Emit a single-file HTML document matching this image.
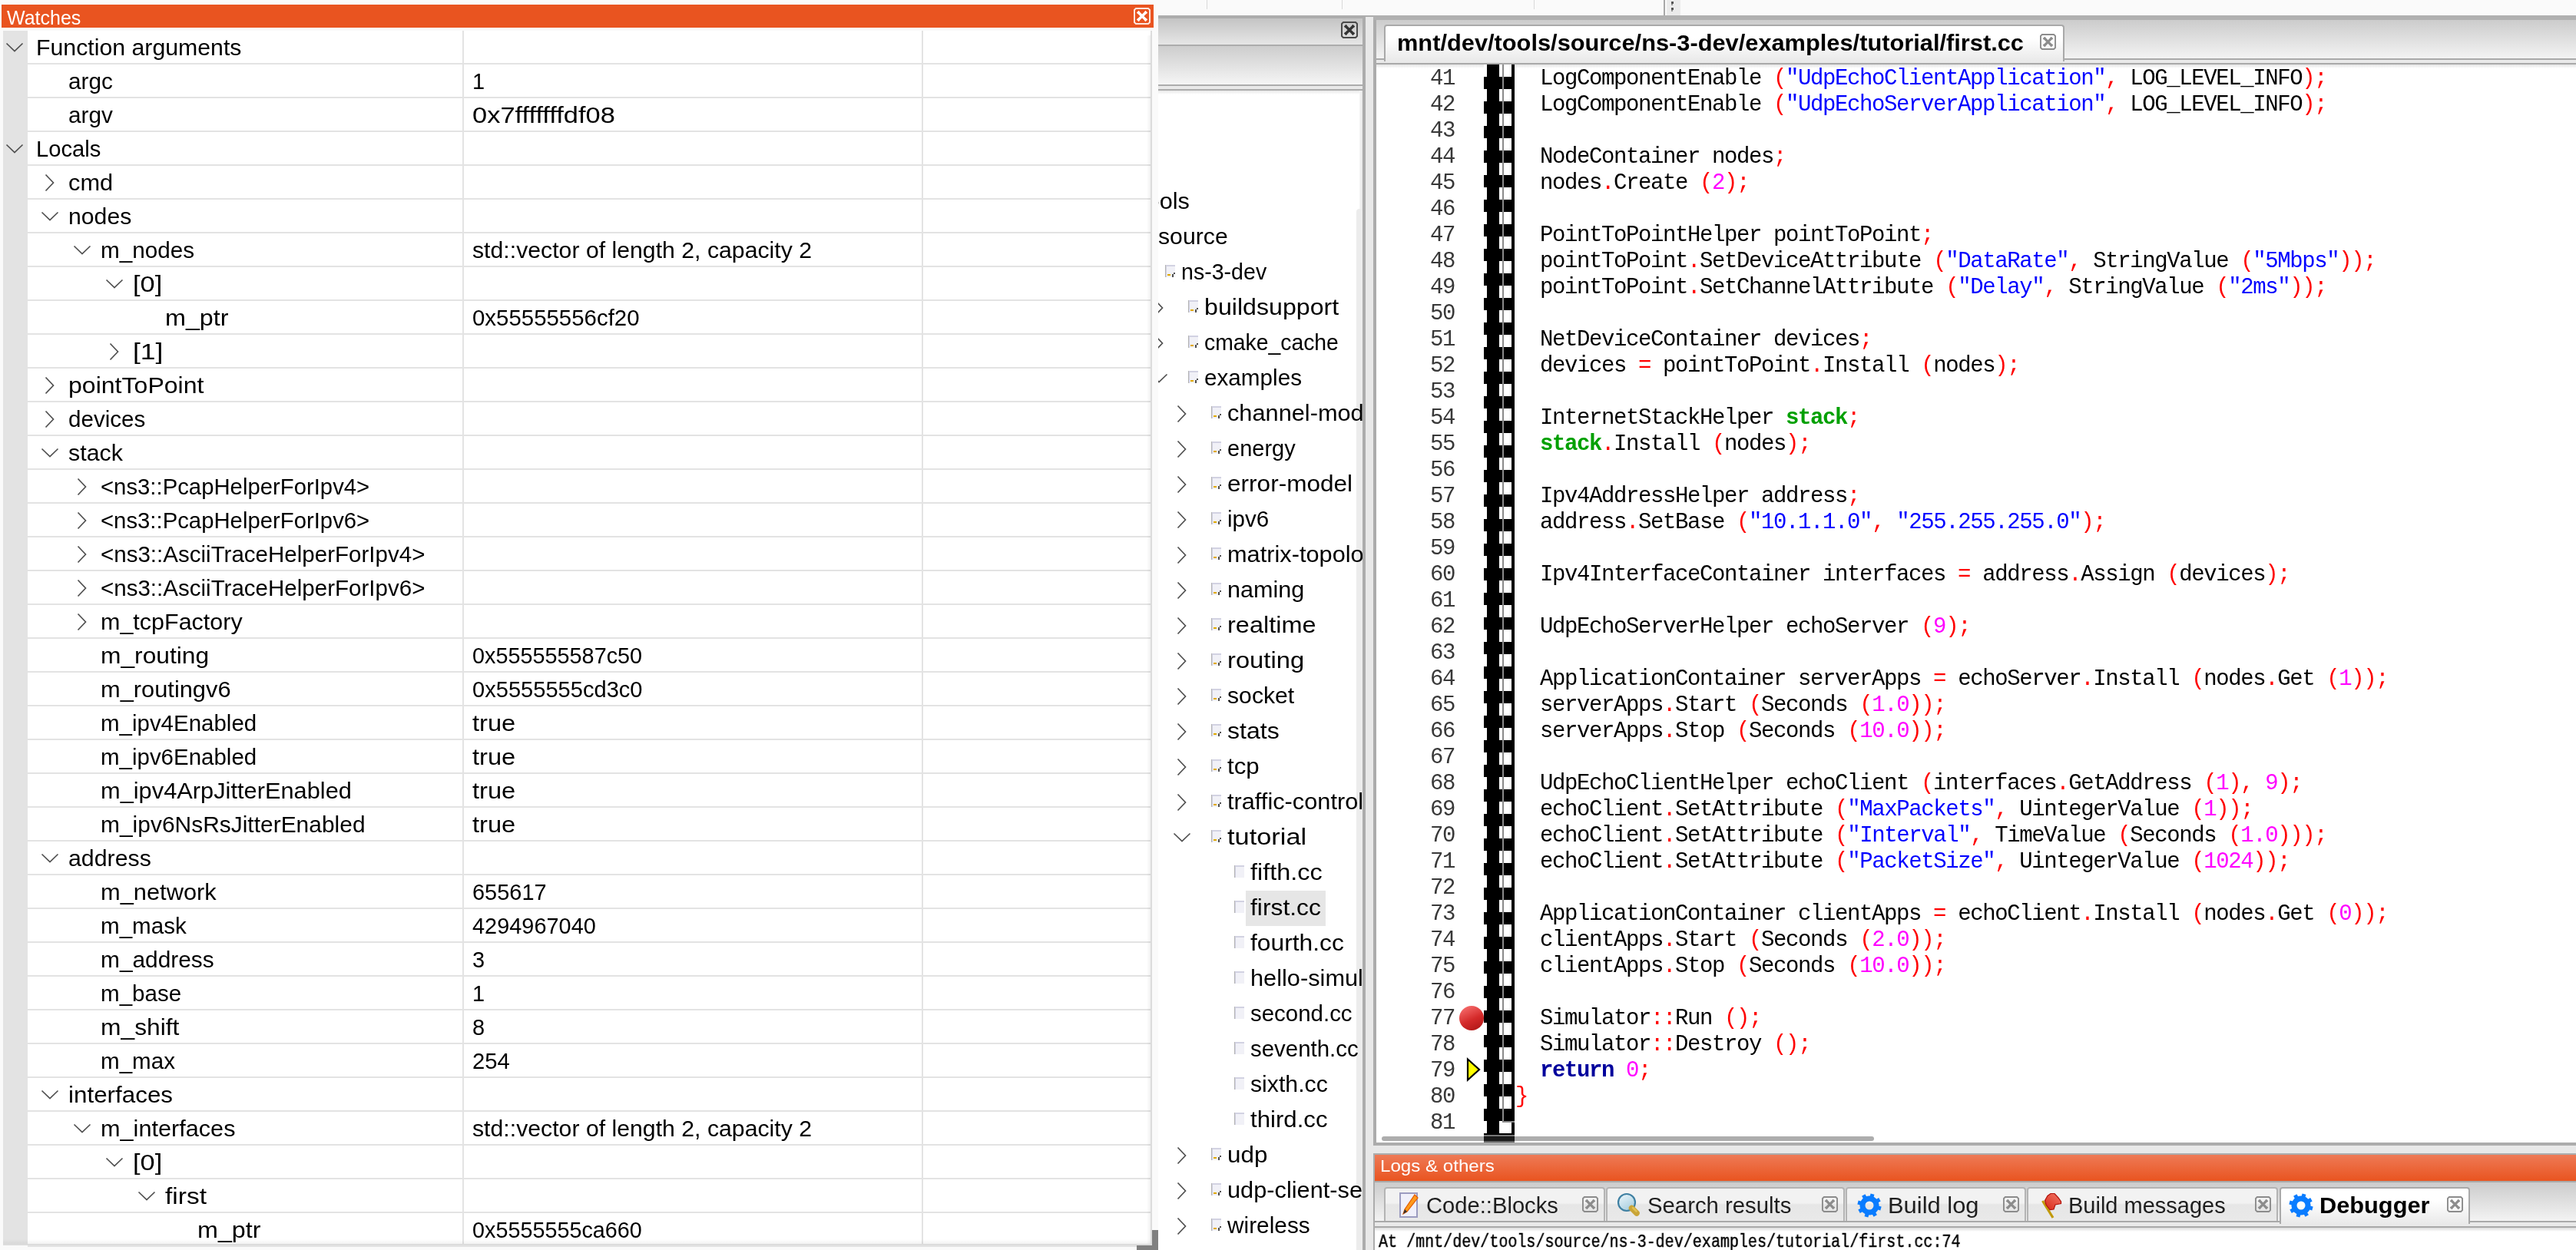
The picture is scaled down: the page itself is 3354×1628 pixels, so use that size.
<!DOCTYPE html>
<html><head><meta charset="utf-8"><title>Code::Blocks Watches</title><style>
*{margin:0;padding:0;box-sizing:content-box}
html,body{width:3354px;height:1628px;overflow:hidden;background:#fafafa}
body{position:relative;font-family:'Liberation Sans', sans-serif;color:#000}
body div{position:absolute}
.t{line-height:0;white-space:pre}
.ln{left:1798px;width:96px;letter-spacing:-1.4px;text-align:right;font-family:'Liberation Mono', monospace;font-size:29px;line-height:0;color:#383838;white-space:pre}
.c{left:1973px;letter-spacing:-1.4px;font-family:'Liberation Mono', monospace;font-size:29px;line-height:0;white-space:pre;color:#000}
.c b{font-weight:400}
.c .s{color:#0000ff}
.c .n{color:#ff00ff}
.c .o{color:#ff0000}
.c .k{color:#00009c;font-weight:700}
.c .g{color:#00a000;font-weight:700}
</style></head><body><div id="root" style="left:0;top:0;width:3354px;height:1628px;will-change:transform;background:#fafafa">
<div style="left:1571px;top:0px;width:1px;height:12px;background:#d9d9d9;"></div>
<div style="left:1747px;top:0px;width:1px;height:12px;background:#d9d9d9;"></div>
<div style="left:1997px;top:0px;width:1px;height:12px;background:#d9d9d9;"></div>
<div style="left:2166px;top:0px;width:1.5px;height:20px;background:#a8a8a8;"></div>
<div style="left:2170px;top:0px;width:18px;height:20px;background:#ebebeb;"></div>
<div style="left:2176px;top:2px;width:3px;height:3px;background:#555;"></div>
<div style="left:2176px;top:5px;width:2px;height:2px;background:#999;"></div>
<div style="left:2176px;top:10px;width:3px;height:3px;background:#555;"></div>
<div style="left:2176px;top:13px;width:2px;height:2px;background:#999;"></div>
<div style="left:2px;top:6px;width:1500px;height:30px;background:#e95420;"></div>
<div class="t" style="left:9px;top:22.99px;font-size:26px;color:#fff;transform:scaleX(0.9619);transform-origin:0 0;">Watches</div>
<svg style="position:absolute;left:1476px;top:10px" width="22" height="22" viewBox="0 0 22 22"><path d="M3 1H19L21 3V19L19 21H3L1 19V3Z" fill="none" stroke="#fff" stroke-opacity="0.85" stroke-width="2"/><path d="M6.5 6.5L15.5 15.5M15.5 6.5L6.5 15.5" stroke="#fff" stroke-width="3.4"/><path d="M4.6 7.4L7.4 4.6M14.6 4.6L17.4 7.4M4.6 14.6L7.4 17.4M14.6 17.4L17.4 14.6" stroke="#fff" stroke-width="2.2"/></svg>
<div style="left:4px;top:40px;width:1496px;height:1582px;background:#fff;"></div>
<div style="left:4px;top:40px;width:32px;height:1582px;background:#e3e3e3;"></div>
<div style="left:36px;top:82px;width:1462px;height:2px;background:#e3e3e3;"></div>
<div style="left:36px;top:126px;width:1462px;height:2px;background:#e3e3e3;"></div>
<div style="left:36px;top:170px;width:1462px;height:2px;background:#e3e3e3;"></div>
<div style="left:36px;top:214px;width:1462px;height:2px;background:#e3e3e3;"></div>
<div style="left:36px;top:258px;width:1462px;height:2px;background:#e3e3e3;"></div>
<div style="left:36px;top:302px;width:1462px;height:2px;background:#e3e3e3;"></div>
<div style="left:36px;top:346px;width:1462px;height:2px;background:#e3e3e3;"></div>
<div style="left:36px;top:390px;width:1462px;height:2px;background:#e3e3e3;"></div>
<div style="left:36px;top:434px;width:1462px;height:2px;background:#e3e3e3;"></div>
<div style="left:36px;top:478px;width:1462px;height:2px;background:#e3e3e3;"></div>
<div style="left:36px;top:522px;width:1462px;height:2px;background:#e3e3e3;"></div>
<div style="left:36px;top:566px;width:1462px;height:2px;background:#e3e3e3;"></div>
<div style="left:36px;top:610px;width:1462px;height:2px;background:#e3e3e3;"></div>
<div style="left:36px;top:654px;width:1462px;height:2px;background:#e3e3e3;"></div>
<div style="left:36px;top:698px;width:1462px;height:2px;background:#e3e3e3;"></div>
<div style="left:36px;top:742px;width:1462px;height:2px;background:#e3e3e3;"></div>
<div style="left:36px;top:786px;width:1462px;height:2px;background:#e3e3e3;"></div>
<div style="left:36px;top:830px;width:1462px;height:2px;background:#e3e3e3;"></div>
<div style="left:36px;top:874px;width:1462px;height:2px;background:#e3e3e3;"></div>
<div style="left:36px;top:918px;width:1462px;height:2px;background:#e3e3e3;"></div>
<div style="left:36px;top:962px;width:1462px;height:2px;background:#e3e3e3;"></div>
<div style="left:36px;top:1006px;width:1462px;height:2px;background:#e3e3e3;"></div>
<div style="left:36px;top:1050px;width:1462px;height:2px;background:#e3e3e3;"></div>
<div style="left:36px;top:1094px;width:1462px;height:2px;background:#e3e3e3;"></div>
<div style="left:36px;top:1138px;width:1462px;height:2px;background:#e3e3e3;"></div>
<div style="left:36px;top:1182px;width:1462px;height:2px;background:#e3e3e3;"></div>
<div style="left:36px;top:1226px;width:1462px;height:2px;background:#e3e3e3;"></div>
<div style="left:36px;top:1270px;width:1462px;height:2px;background:#e3e3e3;"></div>
<div style="left:36px;top:1314px;width:1462px;height:2px;background:#e3e3e3;"></div>
<div style="left:36px;top:1358px;width:1462px;height:2px;background:#e3e3e3;"></div>
<div style="left:36px;top:1402px;width:1462px;height:2px;background:#e3e3e3;"></div>
<div style="left:36px;top:1446px;width:1462px;height:2px;background:#e3e3e3;"></div>
<div style="left:36px;top:1490px;width:1462px;height:2px;background:#e3e3e3;"></div>
<div style="left:36px;top:1534px;width:1462px;height:2px;background:#e3e3e3;"></div>
<div style="left:36px;top:1578px;width:1462px;height:2px;background:#e3e3e3;"></div>
<div style="left:36px;top:1622px;width:1462px;height:2px;background:#e3e3e3;"></div>
<div style="left:602px;top:40px;width:2px;height:1582px;background:#e3e3e3;"></div>
<div style="left:1200px;top:40px;width:2px;height:1582px;background:#e3e3e3;"></div>
<div style="left:1493px;top:46px;width:5px;height:1574px;background:linear-gradient(90deg,rgba(0,0,0,0),rgba(0,0,0,0.06));border-radius:3px 0 0 0"></div>
<div style="left:1498px;top:40px;width:2px;height:1582px;background:#dcdcdc;"></div>
<div style="left:4px;top:1614px;width:1494px;height:6px;background:linear-gradient(rgba(0,0,0,0),rgba(0,0,0,0.05));"></div>
<div style="left:4px;top:1620px;width:1496px;height:2px;background:#dcdcdc;"></div>
<div style="left:1500px;top:1602px;width:8px;height:26px;background:#808080;"></div>
<div style="left:1480px;top:1622px;width:28px;height:6px;background:#808080;"></div>
<svg style="position:absolute;left:7px;top:54.5px" width="24" height="14"><path d="M1.5 1.5L12 11.5L22.5 1.5" fill="none" stroke="#505050" stroke-width="1.7"/></svg>
<div class="t" style="left:47px;top:61.95px;font-size:29px;transform:scaleX(1.0435);transform-origin:0 0;">Function arguments</div>
<div class="t" style="left:89px;top:105.95px;font-size:29px;transform:scaleX(1.0255);transform-origin:0 0;">argc</div>
<div class="t" style="left:615px;top:105.95px;font-size:29px;">1</div>
<div class="t" style="left:89px;top:149.95px;font-size:29px;transform:scaleX(1.0255);transform-origin:0 0;">argv</div>
<div class="t" style="left:615px;top:149.95px;font-size:29px;transform:scaleX(1.1883);transform-origin:0 0;">0x7fffffffdf08</div>
<svg style="position:absolute;left:7px;top:186.5px" width="24" height="14"><path d="M1.5 1.5L12 11.5L22.5 1.5" fill="none" stroke="#505050" stroke-width="1.7"/></svg>
<div class="t" style="left:47px;top:193.95px;font-size:29px;transform:scaleX(1.0074);transform-origin:0 0;">Locals</div>
<svg style="position:absolute;left:58px;top:225.5px" width="14" height="24"><path d="M1.5 1.5L11.5 12L1.5 22.5" fill="none" stroke="#505050" stroke-width="1.7"/></svg>
<div class="t" style="left:89px;top:237.95px;font-size:29px;transform:scaleX(1.0615);transform-origin:0 0;">cmd</div>
<svg style="position:absolute;left:53px;top:274.5px" width="24" height="14"><path d="M1.5 1.5L12 11.5L22.5 1.5" fill="none" stroke="#505050" stroke-width="1.7"/></svg>
<div class="t" style="left:89px;top:281.95px;font-size:29px;transform:scaleX(1.0421);transform-origin:0 0;">nodes</div>
<svg style="position:absolute;left:95px;top:318.5px" width="24" height="14"><path d="M1.5 1.5L12 11.5L22.5 1.5" fill="none" stroke="#505050" stroke-width="1.7"/></svg>
<div class="t" style="left:131px;top:325.95px;font-size:29px;transform:scaleX(1.0241);transform-origin:0 0;">m_nodes</div>
<div class="t" style="left:615px;top:325.95px;font-size:29px;transform:scaleX(1.0427);transform-origin:0 0;">std::vector of length 2, capacity 2</div>
<svg style="position:absolute;left:137px;top:362.5px" width="24" height="14"><path d="M1.5 1.5L12 11.5L22.5 1.5" fill="none" stroke="#505050" stroke-width="1.7"/></svg>
<div class="t" style="left:173px;top:369.95px;font-size:29px;transform:scaleX(1.1857);transform-origin:0 0;">[0]</div>
<div class="t" style="left:215px;top:413.95px;font-size:29px;transform:scaleX(1.1139);transform-origin:0 0;">m_ptr</div>
<div class="t" style="left:615px;top:413.95px;font-size:29px;transform:scaleX(1.0142);transform-origin:0 0;">0x55555556cf20</div>
<svg style="position:absolute;left:142px;top:445.5px" width="14" height="24"><path d="M1.5 1.5L11.5 12L1.5 22.5" fill="none" stroke="#505050" stroke-width="1.7"/></svg>
<div class="t" style="left:173px;top:457.95px;font-size:29px;transform:scaleX(1.2214);transform-origin:0 0;">[1]</div>
<svg style="position:absolute;left:58px;top:489.5px" width="14" height="24"><path d="M1.5 1.5L11.5 12L1.5 22.5" fill="none" stroke="#505050" stroke-width="1.7"/></svg>
<div class="t" style="left:89px;top:501.95px;font-size:29px;transform:scaleX(1.1057);transform-origin:0 0;">pointToPoint</div>
<svg style="position:absolute;left:58px;top:533.5px" width="14" height="24"><path d="M1.5 1.5L11.5 12L1.5 22.5" fill="none" stroke="#505050" stroke-width="1.7"/></svg>
<div class="t" style="left:89px;top:545.95px;font-size:29px;transform:scaleX(1.0208);transform-origin:0 0;">devices</div>
<svg style="position:absolute;left:53px;top:582.5px" width="24" height="14"><path d="M1.5 1.5L12 11.5L22.5 1.5" fill="none" stroke="#505050" stroke-width="1.7"/></svg>
<div class="t" style="left:89px;top:589.95px;font-size:29px;transform:scaleX(1.0478);transform-origin:0 0;">stack</div>
<svg style="position:absolute;left:100px;top:621.5px" width="14" height="24"><path d="M1.5 1.5L11.5 12L1.5 22.5" fill="none" stroke="#505050" stroke-width="1.7"/></svg>
<div class="t" style="left:131px;top:633.95px;font-size:29px;transform:scaleX(1.0104);transform-origin:0 0;">&lt;ns3::PcapHelperForIpv4&gt;</div>
<svg style="position:absolute;left:100px;top:665.5px" width="14" height="24"><path d="M1.5 1.5L11.5 12L1.5 22.5" fill="none" stroke="#505050" stroke-width="1.7"/></svg>
<div class="t" style="left:131px;top:677.95px;font-size:29px;transform:scaleX(1.0104);transform-origin:0 0;">&lt;ns3::PcapHelperForIpv6&gt;</div>
<svg style="position:absolute;left:100px;top:709.5px" width="14" height="24"><path d="M1.5 1.5L11.5 12L1.5 22.5" fill="none" stroke="#505050" stroke-width="1.7"/></svg>
<div class="t" style="left:131px;top:721.95px;font-size:29px;transform:scaleX(1.0184);transform-origin:0 0;">&lt;ns3::AsciiTraceHelperForIpv4&gt;</div>
<svg style="position:absolute;left:100px;top:753.5px" width="14" height="24"><path d="M1.5 1.5L11.5 12L1.5 22.5" fill="none" stroke="#505050" stroke-width="1.7"/></svg>
<div class="t" style="left:131px;top:765.95px;font-size:29px;transform:scaleX(1.0184);transform-origin:0 0;">&lt;ns3::AsciiTraceHelperForIpv6&gt;</div>
<svg style="position:absolute;left:100px;top:797.5px" width="14" height="24"><path d="M1.5 1.5L11.5 12L1.5 22.5" fill="none" stroke="#505050" stroke-width="1.7"/></svg>
<div class="t" style="left:131px;top:809.95px;font-size:29px;transform:scaleX(1.0511);transform-origin:0 0;">m_tcpFactory</div>
<div class="t" style="left:131px;top:853.95px;font-size:29px;transform:scaleX(1.0944);transform-origin:0 0;">m_routing</div>
<div class="t" style="left:615px;top:853.95px;font-size:29px;transform:scaleX(0.9937);transform-origin:0 0;">0x555555587c50</div>
<div class="t" style="left:131px;top:897.95px;font-size:29px;transform:scaleX(1.0624);transform-origin:0 0;">m_routingv6</div>
<div class="t" style="left:615px;top:897.95px;font-size:29px;transform:scaleX(1.0027);transform-origin:0 0;">0x5555555cd3c0</div>
<div class="t" style="left:131px;top:941.95px;font-size:29px;transform:scaleX(1.0163);transform-origin:0 0;">m_ipv4Enabled</div>
<div class="t" style="left:615px;top:941.95px;font-size:29px;transform:scaleX(1.1265);transform-origin:0 0;">true</div>
<div class="t" style="left:131px;top:985.95px;font-size:29px;transform:scaleX(1.0163);transform-origin:0 0;">m_ipv6Enabled</div>
<div class="t" style="left:615px;top:985.95px;font-size:29px;transform:scaleX(1.1265);transform-origin:0 0;">true</div>
<div class="t" style="left:131px;top:1029.95px;font-size:29px;transform:scaleX(1.0618);transform-origin:0 0;">m_ipv4ArpJitterEnabled</div>
<div class="t" style="left:615px;top:1029.95px;font-size:29px;transform:scaleX(1.1265);transform-origin:0 0;">true</div>
<div class="t" style="left:131px;top:1073.95px;font-size:29px;transform:scaleX(1.0327);transform-origin:0 0;">m_ipv6NsRsJitterEnabled</div>
<div class="t" style="left:615px;top:1073.95px;font-size:29px;transform:scaleX(1.1265);transform-origin:0 0;">true</div>
<svg style="position:absolute;left:53px;top:1110.5px" width="24" height="14"><path d="M1.5 1.5L12 11.5L22.5 1.5" fill="none" stroke="#505050" stroke-width="1.7"/></svg>
<div class="t" style="left:89px;top:1117.95px;font-size:29px;transform:scaleX(1.0455);transform-origin:0 0;">address</div>
<div class="t" style="left:131px;top:1161.95px;font-size:29px;transform:scaleX(1.0629);transform-origin:0 0;">m_network</div>
<div class="t" style="left:615px;top:1161.95px;font-size:29px;transform:scaleX(0.9979);transform-origin:0 0;">655617</div>
<div class="t" style="left:131px;top:1205.95px;font-size:29px;transform:scaleX(1.0206);transform-origin:0 0;">m_mask</div>
<div class="t" style="left:615px;top:1205.95px;font-size:29px;transform:scaleX(0.9975);transform-origin:0 0;">4294967040</div>
<div class="t" style="left:131px;top:1249.95px;font-size:29px;transform:scaleX(1.0298);transform-origin:0 0;">m_address</div>
<div class="t" style="left:615px;top:1249.95px;font-size:29px;">3</div>
<div class="t" style="left:131px;top:1293.95px;font-size:29px;transform:scaleX(1.0200);transform-origin:0 0;">m_base</div>
<div class="t" style="left:615px;top:1293.95px;font-size:29px;">1</div>
<div class="t" style="left:131px;top:1337.95px;font-size:29px;transform:scaleX(1.0957);transform-origin:0 0;">m_shift</div>
<div class="t" style="left:615px;top:1337.95px;font-size:29px;">8</div>
<div class="t" style="left:131px;top:1381.95px;font-size:29px;transform:scaleX(1.0194);transform-origin:0 0;">m_max</div>
<div class="t" style="left:615px;top:1381.95px;font-size:29px;transform:scaleX(1.0106);transform-origin:0 0;">254</div>
<svg style="position:absolute;left:53px;top:1418.5px" width="24" height="14"><path d="M1.5 1.5L12 11.5L22.5 1.5" fill="none" stroke="#505050" stroke-width="1.7"/></svg>
<div class="t" style="left:89px;top:1425.95px;font-size:29px;transform:scaleX(1.0821);transform-origin:0 0;">interfaces</div>
<svg style="position:absolute;left:95px;top:1462.5px" width="24" height="14"><path d="M1.5 1.5L12 11.5L22.5 1.5" fill="none" stroke="#505050" stroke-width="1.7"/></svg>
<div class="t" style="left:131px;top:1469.95px;font-size:29px;transform:scaleX(1.0571);transform-origin:0 0;">m_interfaces</div>
<div class="t" style="left:615px;top:1469.95px;font-size:29px;transform:scaleX(1.0427);transform-origin:0 0;">std::vector of length 2, capacity 2</div>
<svg style="position:absolute;left:137px;top:1506.5px" width="24" height="14"><path d="M1.5 1.5L12 11.5L22.5 1.5" fill="none" stroke="#505050" stroke-width="1.7"/></svg>
<div class="t" style="left:173px;top:1513.95px;font-size:29px;transform:scaleX(1.1857);transform-origin:0 0;">[0]</div>
<svg style="position:absolute;left:179px;top:1550.5px" width="24" height="14"><path d="M1.5 1.5L12 11.5L22.5 1.5" fill="none" stroke="#505050" stroke-width="1.7"/></svg>
<div class="t" style="left:215px;top:1557.95px;font-size:29px;transform:scaleX(1.1553);transform-origin:0 0;">first</div>
<div class="t" style="left:257px;top:1601.95px;font-size:29px;transform:scaleX(1.1139);transform-origin:0 0;">m_ptr</div>
<div class="t" style="left:615px;top:1601.95px;font-size:29px;transform:scaleX(0.9923);transform-origin:0 0;">0x5555555ca660</div>
<div style="left:1508px;top:20px;width:280px;height:4px;background:#acacac;"></div>
<div style="left:1776px;top:20px;width:12px;height:2px;background:#acacac;"></div>
<div style="left:1508px;top:24px;width:268px;height:34px;background:linear-gradient(#c4c4c4,#e6e6e6);"></div>
<div style="left:1508px;top:58px;width:268px;height:2px;background:#acacac;"></div>
<div style="left:1508px;top:60px;width:266px;height:50px;background:linear-gradient(#cdcdcd,#f5f5f5);"></div>
<div style="left:1508px;top:110px;width:266px;height:2px;background:#acacac;"></div>
<div style="left:1508px;top:112px;width:266px;height:4px;background:#e8e8e8;"></div>
<div style="left:1508px;top:116px;width:266px;height:2px;background:#acacac;"></div>
<div style="left:1508px;top:118px;width:266px;height:1510px;background:#fff;"></div>
<div style="left:1508px;top:118px;width:266px;height:5px;background:linear-gradient(#e8e8e8,#fff);"></div>
<div style="left:1774px;top:20px;width:4px;height:1608px;background:#acacac;"></div>
<div style="left:1770px;top:118px;width:4px;height:1510px;background:linear-gradient(90deg,#f6f6f6,#e6e6e6);"></div>
<div style="left:1766px;top:272px;width:8px;height:1356px;background:#ececec;border-radius:4px 4px 0 0"></div>
<svg style="position:absolute;left:1746px;top:28px" width="22" height="22" viewBox="0 0 22 22"><path d="M3 1H19L21 3V19L19 21H3L1 19V3Z" fill="none" stroke="#4a4a4a" stroke-opacity="1.0" stroke-width="2"/><path d="M6.5 6.5L15.5 15.5M15.5 6.5L6.5 15.5" stroke="#333" stroke-width="3.4"/><path d="M4.6 7.4L7.4 4.6M14.6 4.6L17.4 7.4M4.6 14.6L7.4 17.4M14.6 17.4L17.4 14.6" stroke="#333" stroke-width="2.2"/></svg>
<div style="left:1778px;top:22px;width:10px;height:1606px;background:#e8e8e8;"></div>
<div style="left:1508px;top:118px;width:266px;height:1510px;overflow:hidden">
<div class="t" style="left:-24px;top:143.55px;font-size:29px;transform:scaleX(1.06);transform-origin:0 0;">tools</div>
<div class="t" style="left:0px;top:189.55px;font-size:29px;transform:scaleX(1.0424);transform-origin:0 0;">source</div>
<div style="left:9px;top:226.60000000000002px;width:12px;height:16px;background:#f1f1f7;border-left:1px solid #b4b4b4;box-shadow:inset 1px 2px 0 #d2d2e2"></div>
<div style="left:12px;top:238.60000000000002px;width:4px;height:2px;background:#e0a800"></div>
<div style="left:18px;top:238.60000000000002px;width:2px;height:4px;background:#505050"></div>
<div style="left:20px;top:236.60000000000002px;width:2px;height:2px;background:#505050"></div>
<div class="t" style="left:30px;top:235.55px;font-size:29px;transform:scaleX(0.9856);transform-origin:0 0;">ns-3-dev</div>
<div style="left:39px;top:272.6px;width:12px;height:16px;background:#f1f1f7;border-left:1px solid #b4b4b4;box-shadow:inset 1px 2px 0 #d2d2e2"></div>
<div style="left:42px;top:284.6px;width:4px;height:2px;background:#e0a800"></div>
<div style="left:48px;top:284.6px;width:2px;height:4px;background:#505050"></div>
<div style="left:50px;top:282.6px;width:2px;height:2px;background:#505050"></div>
<svg style="position:absolute;left:-6px;top:270.6px" width="14" height="24"><path d="M1.5 1.5L11.5 12L1.5 22.5" fill="none" stroke="#505050" stroke-width="1.7"/></svg>
<div class="t" style="left:60px;top:281.55px;font-size:29px;transform:scaleX(1.1090);transform-origin:0 0;">buildsupport</div>
<div style="left:39px;top:318.6px;width:12px;height:16px;background:#f1f1f7;border-left:1px solid #b4b4b4;box-shadow:inset 1px 2px 0 #d2d2e2"></div>
<div style="left:42px;top:330.6px;width:4px;height:2px;background:#e0a800"></div>
<div style="left:48px;top:330.6px;width:2px;height:4px;background:#505050"></div>
<div style="left:50px;top:328.6px;width:2px;height:2px;background:#505050"></div>
<svg style="position:absolute;left:-6px;top:316.6px" width="14" height="24"><path d="M1.5 1.5L11.5 12L1.5 22.5" fill="none" stroke="#505050" stroke-width="1.7"/></svg>
<div class="t" style="left:60px;top:327.55px;font-size:29px;transform:scaleX(0.9774);transform-origin:0 0;">cmake_cache</div>
<div style="left:39px;top:364.6px;width:12px;height:16px;background:#f1f1f7;border-left:1px solid #b4b4b4;box-shadow:inset 1px 2px 0 #d2d2e2"></div>
<div style="left:42px;top:376.6px;width:4px;height:2px;background:#e0a800"></div>
<div style="left:48px;top:376.6px;width:2px;height:4px;background:#505050"></div>
<div style="left:50px;top:374.6px;width:2px;height:2px;background:#505050"></div>
<svg style="position:absolute;left:-11px;top:367.6px" width="24" height="14"><path d="M1.5 1.5L12 11.5L22.5 1.5" fill="none" stroke="#505050" stroke-width="1.7"/></svg>
<div class="t" style="left:60px;top:373.55px;font-size:29px;transform:scaleX(1.0230);transform-origin:0 0;">examples</div>
<div style="left:69px;top:410.6px;width:12px;height:16px;background:#f1f1f7;border-left:1px solid #b4b4b4;box-shadow:inset 1px 2px 0 #d2d2e2"></div>
<div style="left:72px;top:422.6px;width:4px;height:2px;background:#e0a800"></div>
<div style="left:78px;top:422.6px;width:2px;height:4px;background:#505050"></div>
<div style="left:80px;top:420.6px;width:2px;height:2px;background:#505050"></div>
<svg style="position:absolute;left:24px;top:408.6px" width="14" height="24"><path d="M1.5 1.5L11.5 12L1.5 22.5" fill="none" stroke="#505050" stroke-width="1.7"/></svg>
<div class="t" style="left:90px;top:419.55px;font-size:29px;transform:scaleX(1.06);transform-origin:0 0;">channel-models</div>
<div style="left:69px;top:456.6px;width:12px;height:16px;background:#f1f1f7;border-left:1px solid #b4b4b4;box-shadow:inset 1px 2px 0 #d2d2e2"></div>
<div style="left:72px;top:468.6px;width:4px;height:2px;background:#e0a800"></div>
<div style="left:78px;top:468.6px;width:2px;height:4px;background:#505050"></div>
<div style="left:80px;top:466.6px;width:2px;height:2px;background:#505050"></div>
<svg style="position:absolute;left:24px;top:454.6px" width="14" height="24"><path d="M1.5 1.5L11.5 12L1.5 22.5" fill="none" stroke="#505050" stroke-width="1.7"/></svg>
<div class="t" style="left:90px;top:465.55px;font-size:29px;transform:scaleX(1.0000);transform-origin:0 0;">energy</div>
<div style="left:69px;top:502.6px;width:12px;height:16px;background:#f1f1f7;border-left:1px solid #b4b4b4;box-shadow:inset 1px 2px 0 #d2d2e2"></div>
<div style="left:72px;top:514.6px;width:4px;height:2px;background:#e0a800"></div>
<div style="left:78px;top:514.6px;width:2px;height:4px;background:#505050"></div>
<div style="left:80px;top:512.6px;width:2px;height:2px;background:#505050"></div>
<svg style="position:absolute;left:24px;top:500.6px" width="14" height="24"><path d="M1.5 1.5L11.5 12L1.5 22.5" fill="none" stroke="#505050" stroke-width="1.7"/></svg>
<div class="t" style="left:90px;top:511.55px;font-size:29px;transform:scaleX(1.0884);transform-origin:0 0;">error-model</div>
<div style="left:69px;top:548.6px;width:12px;height:16px;background:#f1f1f7;border-left:1px solid #b4b4b4;box-shadow:inset 1px 2px 0 #d2d2e2"></div>
<div style="left:72px;top:560.6px;width:4px;height:2px;background:#e0a800"></div>
<div style="left:78px;top:560.6px;width:2px;height:4px;background:#505050"></div>
<div style="left:80px;top:558.6px;width:2px;height:2px;background:#505050"></div>
<svg style="position:absolute;left:24px;top:546.6px" width="14" height="24"><path d="M1.5 1.5L11.5 12L1.5 22.5" fill="none" stroke="#505050" stroke-width="1.7"/></svg>
<div class="t" style="left:90px;top:557.55px;font-size:29px;transform:scaleX(1.0200);transform-origin:0 0;">ipv6</div>
<div style="left:69px;top:594.6px;width:12px;height:16px;background:#f1f1f7;border-left:1px solid #b4b4b4;box-shadow:inset 1px 2px 0 #d2d2e2"></div>
<div style="left:72px;top:606.6px;width:4px;height:2px;background:#e0a800"></div>
<div style="left:78px;top:606.6px;width:2px;height:4px;background:#505050"></div>
<div style="left:80px;top:604.6px;width:2px;height:2px;background:#505050"></div>
<svg style="position:absolute;left:24px;top:592.6px" width="14" height="24"><path d="M1.5 1.5L11.5 12L1.5 22.5" fill="none" stroke="#505050" stroke-width="1.7"/></svg>
<div class="t" style="left:90px;top:603.55px;font-size:29px;transform:scaleX(1.06);transform-origin:0 0;">matrix-topology</div>
<div style="left:69px;top:640.6px;width:12px;height:16px;background:#f1f1f7;border-left:1px solid #b4b4b4;box-shadow:inset 1px 2px 0 #d2d2e2"></div>
<div style="left:72px;top:652.6px;width:4px;height:2px;background:#e0a800"></div>
<div style="left:78px;top:652.6px;width:2px;height:4px;background:#505050"></div>
<div style="left:80px;top:650.6px;width:2px;height:2px;background:#505050"></div>
<svg style="position:absolute;left:24px;top:638.6px" width="14" height="24"><path d="M1.5 1.5L11.5 12L1.5 22.5" fill="none" stroke="#505050" stroke-width="1.7"/></svg>
<div class="t" style="left:90px;top:649.55px;font-size:29px;transform:scaleX(1.0549);transform-origin:0 0;">naming</div>
<div style="left:69px;top:686.6px;width:12px;height:16px;background:#f1f1f7;border-left:1px solid #b4b4b4;box-shadow:inset 1px 2px 0 #d2d2e2"></div>
<div style="left:72px;top:698.6px;width:4px;height:2px;background:#e0a800"></div>
<div style="left:78px;top:698.6px;width:2px;height:4px;background:#505050"></div>
<div style="left:80px;top:696.6px;width:2px;height:2px;background:#505050"></div>
<svg style="position:absolute;left:24px;top:684.6px" width="14" height="24"><path d="M1.5 1.5L11.5 12L1.5 22.5" fill="none" stroke="#505050" stroke-width="1.7"/></svg>
<div class="t" style="left:90px;top:695.55px;font-size:29px;transform:scaleX(1.1200);transform-origin:0 0;">realtime</div>
<div style="left:69px;top:732.6px;width:12px;height:16px;background:#f1f1f7;border-left:1px solid #b4b4b4;box-shadow:inset 1px 2px 0 #d2d2e2"></div>
<div style="left:72px;top:744.6px;width:4px;height:2px;background:#e0a800"></div>
<div style="left:78px;top:744.6px;width:2px;height:4px;background:#505050"></div>
<div style="left:80px;top:742.6px;width:2px;height:2px;background:#505050"></div>
<svg style="position:absolute;left:24px;top:730.6px" width="14" height="24"><path d="M1.5 1.5L11.5 12L1.5 22.5" fill="none" stroke="#505050" stroke-width="1.7"/></svg>
<div class="t" style="left:90px;top:741.55px;font-size:29px;transform:scaleX(1.1294);transform-origin:0 0;">routing</div>
<div style="left:69px;top:778.6px;width:12px;height:16px;background:#f1f1f7;border-left:1px solid #b4b4b4;box-shadow:inset 1px 2px 0 #d2d2e2"></div>
<div style="left:72px;top:790.6px;width:4px;height:2px;background:#e0a800"></div>
<div style="left:78px;top:790.6px;width:2px;height:4px;background:#505050"></div>
<div style="left:80px;top:788.6px;width:2px;height:2px;background:#505050"></div>
<svg style="position:absolute;left:24px;top:776.6px" width="14" height="24"><path d="M1.5 1.5L11.5 12L1.5 22.5" fill="none" stroke="#505050" stroke-width="1.7"/></svg>
<div class="t" style="left:90px;top:787.55px;font-size:29px;transform:scaleX(1.0410);transform-origin:0 0;">socket</div>
<div style="left:69px;top:824.6px;width:12px;height:16px;background:#f1f1f7;border-left:1px solid #b4b4b4;box-shadow:inset 1px 2px 0 #d2d2e2"></div>
<div style="left:72px;top:836.6px;width:4px;height:2px;background:#e0a800"></div>
<div style="left:78px;top:836.6px;width:2px;height:4px;background:#505050"></div>
<div style="left:80px;top:834.6px;width:2px;height:2px;background:#505050"></div>
<svg style="position:absolute;left:24px;top:822.6px" width="14" height="24"><path d="M1.5 1.5L11.5 12L1.5 22.5" fill="none" stroke="#505050" stroke-width="1.7"/></svg>
<div class="t" style="left:90px;top:833.55px;font-size:29px;transform:scaleX(1.1068);transform-origin:0 0;">stats</div>
<div style="left:69px;top:870.6px;width:12px;height:16px;background:#f1f1f7;border-left:1px solid #b4b4b4;box-shadow:inset 1px 2px 0 #d2d2e2"></div>
<div style="left:72px;top:882.6px;width:4px;height:2px;background:#e0a800"></div>
<div style="left:78px;top:882.6px;width:2px;height:4px;background:#505050"></div>
<div style="left:80px;top:880.6px;width:2px;height:2px;background:#505050"></div>
<svg style="position:absolute;left:24px;top:868.6px" width="14" height="24"><path d="M1.5 1.5L11.5 12L1.5 22.5" fill="none" stroke="#505050" stroke-width="1.7"/></svg>
<div class="t" style="left:90px;top:879.55px;font-size:29px;transform:scaleX(1.0789);transform-origin:0 0;">tcp</div>
<div style="left:69px;top:916.5999999999999px;width:12px;height:16px;background:#f1f1f7;border-left:1px solid #b4b4b4;box-shadow:inset 1px 2px 0 #d2d2e2"></div>
<div style="left:72px;top:928.5999999999999px;width:4px;height:2px;background:#e0a800"></div>
<div style="left:78px;top:928.5999999999999px;width:2px;height:4px;background:#505050"></div>
<div style="left:80px;top:926.5999999999999px;width:2px;height:2px;background:#505050"></div>
<svg style="position:absolute;left:24px;top:914.5999999999999px" width="14" height="24"><path d="M1.5 1.5L11.5 12L1.5 22.5" fill="none" stroke="#505050" stroke-width="1.7"/></svg>
<div class="t" style="left:90px;top:925.55px;font-size:29px;transform:scaleX(1.06);transform-origin:0 0;">traffic-control</div>
<div style="left:69px;top:962.5999999999999px;width:12px;height:16px;background:#f1f1f7;border-left:1px solid #b4b4b4;box-shadow:inset 1px 2px 0 #d2d2e2"></div>
<div style="left:72px;top:974.5999999999999px;width:4px;height:2px;background:#e0a800"></div>
<div style="left:78px;top:974.5999999999999px;width:2px;height:4px;background:#505050"></div>
<div style="left:80px;top:972.5999999999999px;width:2px;height:2px;background:#505050"></div>
<svg style="position:absolute;left:19px;top:965.5999999999999px" width="24" height="14"><path d="M1.5 1.5L12 11.5L22.5 1.5" fill="none" stroke="#505050" stroke-width="1.7"/></svg>
<div class="t" style="left:90px;top:971.55px;font-size:29px;transform:scaleX(1.1859);transform-origin:0 0;">tutorial</div>
<div style="left:99px;top:1008.5999999999999px;width:12px;height:16px;background:#f1f1f7;border-left:1px solid #b4b4b4;box-shadow:inset 1px 2px 0 #d2d2e2"></div>
<div class="t" style="left:120px;top:1017.55px;font-size:29px;transform:scaleX(1.1181);transform-origin:0 0;">fifth.cc</div>
<div style="left:114px;top:1041.6px;width:104px;height:46px;background:#e6e6e6;"></div>
<div style="left:99px;top:1054.6px;width:12px;height:16px;background:#f1f1f7;border-left:1px solid #b4b4b4;box-shadow:inset 1px 2px 0 #d2d2e2"></div>
<div class="t" style="left:120px;top:1063.55px;font-size:29px;transform:scaleX(1.0964);transform-origin:0 0;">first.cc</div>
<div style="left:99px;top:1100.6px;width:12px;height:16px;background:#f1f1f7;border-left:1px solid #b4b4b4;box-shadow:inset 1px 2px 0 #d2d2e2"></div>
<div class="t" style="left:120px;top:1109.55px;font-size:29px;transform:scaleX(1.0955);transform-origin:0 0;">fourth.cc</div>
<div style="left:99px;top:1146.6px;width:12px;height:16px;background:#f1f1f7;border-left:1px solid #b4b4b4;box-shadow:inset 1px 2px 0 #d2d2e2"></div>
<div class="t" style="left:120px;top:1155.55px;font-size:29px;transform:scaleX(1.06);transform-origin:0 0;">hello-simulator</div>
<div style="left:99px;top:1192.6px;width:12px;height:16px;background:#f1f1f7;border-left:1px solid #b4b4b4;box-shadow:inset 1px 2px 0 #d2d2e2"></div>
<div class="t" style="left:120px;top:1201.55px;font-size:29px;transform:scaleX(1.0155);transform-origin:0 0;">second.cc</div>
<div style="left:99px;top:1238.6px;width:12px;height:16px;background:#f1f1f7;border-left:1px solid #b4b4b4;box-shadow:inset 1px 2px 0 #d2d2e2"></div>
<div class="t" style="left:120px;top:1247.55px;font-size:29px;transform:scaleX(1.0146);transform-origin:0 0;">seventh.cc</div>
<div style="left:99px;top:1284.6px;width:12px;height:16px;background:#f1f1f7;border-left:1px solid #b4b4b4;box-shadow:inset 1px 2px 0 #d2d2e2"></div>
<div class="t" style="left:120px;top:1293.55px;font-size:29px;transform:scaleX(1.0421);transform-origin:0 0;">sixth.cc</div>
<div style="left:99px;top:1330.6px;width:12px;height:16px;background:#f1f1f7;border-left:1px solid #b4b4b4;box-shadow:inset 1px 2px 0 #d2d2e2"></div>
<div class="t" style="left:120px;top:1339.55px;font-size:29px;transform:scaleX(1.0753);transform-origin:0 0;">third.cc</div>
<div style="left:69px;top:1376.6px;width:12px;height:16px;background:#f1f1f7;border-left:1px solid #b4b4b4;box-shadow:inset 1px 2px 0 #d2d2e2"></div>
<div style="left:72px;top:1388.6px;width:4px;height:2px;background:#e0a800"></div>
<div style="left:78px;top:1388.6px;width:2px;height:4px;background:#505050"></div>
<div style="left:80px;top:1386.6px;width:2px;height:2px;background:#505050"></div>
<svg style="position:absolute;left:24px;top:1374.6px" width="14" height="24"><path d="M1.5 1.5L11.5 12L1.5 22.5" fill="none" stroke="#505050" stroke-width="1.7"/></svg>
<div class="t" style="left:90px;top:1385.55px;font-size:29px;transform:scaleX(1.0822);transform-origin:0 0;">udp</div>
<div style="left:69px;top:1422.6px;width:12px;height:16px;background:#f1f1f7;border-left:1px solid #b4b4b4;box-shadow:inset 1px 2px 0 #d2d2e2"></div>
<div style="left:72px;top:1434.6px;width:4px;height:2px;background:#e0a800"></div>
<div style="left:78px;top:1434.6px;width:2px;height:4px;background:#505050"></div>
<div style="left:80px;top:1432.6px;width:2px;height:2px;background:#505050"></div>
<svg style="position:absolute;left:24px;top:1420.6px" width="14" height="24"><path d="M1.5 1.5L11.5 12L1.5 22.5" fill="none" stroke="#505050" stroke-width="1.7"/></svg>
<div class="t" style="left:90px;top:1431.55px;font-size:29px;transform:scaleX(1.06);transform-origin:0 0;">udp-client-server</div>
<div style="left:69px;top:1468.6px;width:12px;height:16px;background:#f1f1f7;border-left:1px solid #b4b4b4;box-shadow:inset 1px 2px 0 #d2d2e2"></div>
<div style="left:72px;top:1480.6px;width:4px;height:2px;background:#e0a800"></div>
<div style="left:78px;top:1480.6px;width:2px;height:4px;background:#505050"></div>
<div style="left:80px;top:1478.6px;width:2px;height:2px;background:#505050"></div>
<svg style="position:absolute;left:24px;top:1466.6px" width="14" height="24"><path d="M1.5 1.5L11.5 12L1.5 22.5" fill="none" stroke="#505050" stroke-width="1.7"/></svg>
<div class="t" style="left:90px;top:1477.55px;font-size:29px;transform:scaleX(1.0288);transform-origin:0 0;">wireless</div>
</div>
<div style="left:1788px;top:20px;width:4px;height:1472px;background:#acacac;"></div>
<div style="left:1788px;top:20px;width:1566px;height:6px;background:#b0b0b0;"></div>
<div style="left:1792px;top:26px;width:1562px;height:50px;background:linear-gradient(#cccccc,#f3f3f3);"></div>
<div style="left:1792px;top:76px;width:1562px;height:2px;background:#a9a9a9;"></div>
<div style="left:1792px;top:78px;width:1562px;height:4px;background:#e9e9e9;"></div>
<div style="left:1792px;top:82px;width:1562px;height:2px;background:#a9a9a9;"></div>
<div style="left:1802px;top:32px;width:882px;height:46px;border:2px solid #a9a9a9;border-bottom:0;border-radius:4px 4px 0 0;background:linear-gradient(#fff 35%,#e9e9e9)"></div>
<div class="t" style="left:1819px;top:55.95px;font-size:29px;font-weight:700;transform:scaleX(1.0614);transform-origin:0 0;">mnt/dev/tools/source/ns-3-dev/examples/tutorial/first.cc</div>
<svg style="position:absolute;left:2656px;top:44px" width="21" height="21" viewBox="0 0 22 22"><path d="M3 1H19L21 3V19L19 21H3L1 19V3Z" fill="none" stroke="#8c8c8c" stroke-opacity="1.0" stroke-width="2"/><path d="M6.5 6.5L15.5 15.5M15.5 6.5L6.5 15.5" stroke="#8c8c8c" stroke-width="3.4"/><path d="M4.6 7.4L7.4 4.6M14.6 4.6L17.4 7.4M4.6 14.6L7.4 17.4M14.6 17.4L17.4 14.6" stroke="#8c8c8c" stroke-width="2.2"/></svg>
<div style="left:1792px;top:84px;width:1562px;height:1404px;background:#fff;"></div>
<div style="left:1792px;top:84px;width:1562px;height:5px;background:linear-gradient(#e4e4e4,#fff);"></div>
<div style="left:1799px;top:1480px;width:641px;height:6px;background:#adadad;border-radius:3px"></div>
<div style="left:1788px;top:1488px;width:1566px;height:4px;background:#acacac;"></div>
<div style="left:1936px;top:84px;width:16px;height:1404px;background:#000"></div>
<div style="left:1968px;top:84px;width:4px;height:1404px;background:#000"></div>
<div style="left:1952px;top:84px;width:16px;height:1404px;background:repeating-linear-gradient(#fff 0 16px,#000 16px 32px)"></div>
<div style="left:1932px;top:84px;width:4px;height:1404px;background:repeating-linear-gradient(#fff 0 16px,#000 16px 32px)"></div>
<div style="left:1956px;top:84px;width:2px;height:1378px;background:#8a8a8a;"></div>
<div style="left:1956px;top:1460px;width:16px;height:2px;background:#8a8a8a;"></div>
<div style="left:1932px;top:1478px;width:40px;height:10px;background:#1a1a1a;"></div>
<div style="left:1932px;top:1478px;width:40px;height:2px;background:#777;"></div>
<div style="left:1932px;top:1486px;width:40px;height:2px;background:#666;"></div>
<div style="left:1900px;top:1310px;width:32px;height:32px;border-radius:50%;background:linear-gradient(155deg,#f56a6a 10%,#d42a2a 55%,#a81212)"></div>
<svg style="position:absolute;left:1906px;top:1374px" width="26" height="38"><path d="M5 5.5L20 19L5 32.5Z" fill="#ffff00" stroke="#000" stroke-width="2.2" stroke-linejoin="miter"/></svg>
<div class="ln" style="top:102.58px">41</div>
<div class="c" style="top:102.58px">  LogComponentEnable <b class="o">(</b><b class="s">"UdpEchoClientApplication"</b><b class="o">,</b> LOG_LEVEL_INFO<b class="o">)</b><b class="o">;</b></div>
<div class="ln" style="top:136.58px">42</div>
<div class="c" style="top:136.58px">  LogComponentEnable <b class="o">(</b><b class="s">"UdpEchoServerApplication"</b><b class="o">,</b> LOG_LEVEL_INFO<b class="o">)</b><b class="o">;</b></div>
<div class="ln" style="top:170.58px">43</div>
<div class="ln" style="top:204.58px">44</div>
<div class="c" style="top:204.58px">  NodeContainer nodes<b class="o">;</b></div>
<div class="ln" style="top:238.58px">45</div>
<div class="c" style="top:238.58px">  nodes<b class="o">.</b>Create <b class="o">(</b><b class="n">2</b><b class="o">)</b><b class="o">;</b></div>
<div class="ln" style="top:272.58px">46</div>
<div class="ln" style="top:306.58px">47</div>
<div class="c" style="top:306.58px">  PointToPointHelper pointToPoint<b class="o">;</b></div>
<div class="ln" style="top:340.58px">48</div>
<div class="c" style="top:340.58px">  pointToPoint<b class="o">.</b>SetDeviceAttribute <b class="o">(</b><b class="s">"DataRate"</b><b class="o">,</b> StringValue <b class="o">(</b><b class="s">"5Mbps"</b><b class="o">)</b><b class="o">)</b><b class="o">;</b></div>
<div class="ln" style="top:374.58px">49</div>
<div class="c" style="top:374.58px">  pointToPoint<b class="o">.</b>SetChannelAttribute <b class="o">(</b><b class="s">"Delay"</b><b class="o">,</b> StringValue <b class="o">(</b><b class="s">"2ms"</b><b class="o">)</b><b class="o">)</b><b class="o">;</b></div>
<div class="ln" style="top:408.58px">50</div>
<div class="ln" style="top:442.58px">51</div>
<div class="c" style="top:442.58px">  NetDeviceContainer devices<b class="o">;</b></div>
<div class="ln" style="top:476.58px">52</div>
<div class="c" style="top:476.58px">  devices <b class="o">=</b> pointToPoint<b class="o">.</b>Install <b class="o">(</b>nodes<b class="o">)</b><b class="o">;</b></div>
<div class="ln" style="top:510.58px">53</div>
<div class="ln" style="top:544.58px">54</div>
<div class="c" style="top:544.58px">  InternetStackHelper <b class="g">stack</b><b class="o">;</b></div>
<div class="ln" style="top:578.58px">55</div>
<div class="c" style="top:578.58px">  <b class="g">stack</b><b class="o">.</b>Install <b class="o">(</b>nodes<b class="o">)</b><b class="o">;</b></div>
<div class="ln" style="top:612.58px">56</div>
<div class="ln" style="top:646.58px">57</div>
<div class="c" style="top:646.58px">  Ipv4AddressHelper address<b class="o">;</b></div>
<div class="ln" style="top:680.58px">58</div>
<div class="c" style="top:680.58px">  address<b class="o">.</b>SetBase <b class="o">(</b><b class="s">"10.1.1.0"</b><b class="o">,</b> <b class="s">"255.255.255.0"</b><b class="o">)</b><b class="o">;</b></div>
<div class="ln" style="top:714.58px">59</div>
<div class="ln" style="top:748.58px">60</div>
<div class="c" style="top:748.58px">  Ipv4InterfaceContainer interfaces <b class="o">=</b> address<b class="o">.</b>Assign <b class="o">(</b>devices<b class="o">)</b><b class="o">;</b></div>
<div class="ln" style="top:782.58px">61</div>
<div class="ln" style="top:816.58px">62</div>
<div class="c" style="top:816.58px">  UdpEchoServerHelper echoServer <b class="o">(</b><b class="n">9</b><b class="o">)</b><b class="o">;</b></div>
<div class="ln" style="top:850.58px">63</div>
<div class="ln" style="top:884.58px">64</div>
<div class="c" style="top:884.58px">  ApplicationContainer serverApps <b class="o">=</b> echoServer<b class="o">.</b>Install <b class="o">(</b>nodes<b class="o">.</b>Get <b class="o">(</b><b class="n">1</b><b class="o">)</b><b class="o">)</b><b class="o">;</b></div>
<div class="ln" style="top:918.58px">65</div>
<div class="c" style="top:918.58px">  serverApps<b class="o">.</b>Start <b class="o">(</b>Seconds <b class="o">(</b><b class="n">1.0</b><b class="o">)</b><b class="o">)</b><b class="o">;</b></div>
<div class="ln" style="top:952.58px">66</div>
<div class="c" style="top:952.58px">  serverApps<b class="o">.</b>Stop <b class="o">(</b>Seconds <b class="o">(</b><b class="n">10.0</b><b class="o">)</b><b class="o">)</b><b class="o">;</b></div>
<div class="ln" style="top:986.58px">67</div>
<div class="ln" style="top:1020.58px">68</div>
<div class="c" style="top:1020.58px">  UdpEchoClientHelper echoClient <b class="o">(</b>interfaces<b class="o">.</b>GetAddress <b class="o">(</b><b class="n">1</b><b class="o">)</b><b class="o">,</b> <b class="n">9</b><b class="o">)</b><b class="o">;</b></div>
<div class="ln" style="top:1054.58px">69</div>
<div class="c" style="top:1054.58px">  echoClient<b class="o">.</b>SetAttribute <b class="o">(</b><b class="s">"MaxPackets"</b><b class="o">,</b> UintegerValue <b class="o">(</b><b class="n">1</b><b class="o">)</b><b class="o">)</b><b class="o">;</b></div>
<div class="ln" style="top:1088.58px">70</div>
<div class="c" style="top:1088.58px">  echoClient<b class="o">.</b>SetAttribute <b class="o">(</b><b class="s">"Interval"</b><b class="o">,</b> TimeValue <b class="o">(</b>Seconds <b class="o">(</b><b class="n">1.0</b><b class="o">)</b><b class="o">)</b><b class="o">)</b><b class="o">;</b></div>
<div class="ln" style="top:1122.58px">71</div>
<div class="c" style="top:1122.58px">  echoClient<b class="o">.</b>SetAttribute <b class="o">(</b><b class="s">"PacketSize"</b><b class="o">,</b> UintegerValue <b class="o">(</b><b class="n">1024</b><b class="o">)</b><b class="o">)</b><b class="o">;</b></div>
<div class="ln" style="top:1156.58px">72</div>
<div class="ln" style="top:1190.58px">73</div>
<div class="c" style="top:1190.58px">  ApplicationContainer clientApps <b class="o">=</b> echoClient<b class="o">.</b>Install <b class="o">(</b>nodes<b class="o">.</b>Get <b class="o">(</b><b class="n">0</b><b class="o">)</b><b class="o">)</b><b class="o">;</b></div>
<div class="ln" style="top:1224.58px">74</div>
<div class="c" style="top:1224.58px">  clientApps<b class="o">.</b>Start <b class="o">(</b>Seconds <b class="o">(</b><b class="n">2.0</b><b class="o">)</b><b class="o">)</b><b class="o">;</b></div>
<div class="ln" style="top:1258.58px">75</div>
<div class="c" style="top:1258.58px">  clientApps<b class="o">.</b>Stop <b class="o">(</b>Seconds <b class="o">(</b><b class="n">10.0</b><b class="o">)</b><b class="o">)</b><b class="o">;</b></div>
<div class="ln" style="top:1292.58px">76</div>
<div class="ln" style="top:1326.58px">77</div>
<div class="c" style="top:1326.58px">  Simulator<b class="o">:</b><b class="o">:</b>Run <b class="o">(</b><b class="o">)</b><b class="o">;</b></div>
<div class="ln" style="top:1360.58px">78</div>
<div class="c" style="top:1360.58px">  Simulator<b class="o">:</b><b class="o">:</b>Destroy <b class="o">(</b><b class="o">)</b><b class="o">;</b></div>
<div class="ln" style="top:1394.58px">79</div>
<div class="c" style="top:1394.58px">  <b class="k">return</b> <b class="n">0</b><b class="o">;</b></div>
<div class="ln" style="top:1428.58px">80</div>
<div class="c" style="top:1428.58px"><b class="o">}</b></div>
<div class="ln" style="top:1462.58px">81</div>
<div style="left:1778px;top:1492px;width:1576px;height:10px;background:#e8e8e8;"></div>
<div style="left:1788px;top:1502px;width:1566px;height:2px;background:#acacac;"></div>
<div style="left:1788px;top:1502px;width:2px;height:126px;background:#acacac;"></div>
<div style="left:1790px;top:1504px;width:1564px;height:34px;background:linear-gradient(#ee7a56,#e95420);"></div>
<div class="t" style="left:1796.5px;top:1518.10px;font-size:22.8px;color:#fff;transform:scaleX(1.0580);transform-origin:0 0;">Logs &amp; others</div>
<div style="left:1790px;top:1538px;width:1564px;height:2px;background:#a9a9a9;"></div>
<div style="left:1790px;top:1540px;width:1564px;height:50px;background:linear-gradient(#cccccc,#f3f3f3);"></div>
<div style="left:1790px;top:1590px;width:1564px;height:2px;background:#a9a9a9;"></div>
<div style="left:1790px;top:1592px;width:1564px;height:5px;background:#e9e9e9;"></div>
<div style="left:1790px;top:1597px;width:1564px;height:2px;background:#a9a9a9;"></div>
<div style="left:1790px;top:1599px;width:1564px;height:29px;background:#fff;"></div>
<div style="left:1790px;top:1599px;width:1564px;height:5px;background:linear-gradient(#dcdcdc,#fff);"></div>
<div style="left:1802px;top:1546px;width:284px;height:42px;border:2px solid #b4b4b4;border-bottom:0;border-radius:4px 4px 0 0;background:linear-gradient(#f2f2f2 45%,#e6e6e6 50%,#e9e9e9)"></div>
<div class="t" style="left:1857px;top:1569.95px;font-size:29px;color:#1e1e1e;transform:scaleX(1.0059);transform-origin:0 0;">Code::Blocks</div>
<svg style="position:absolute;left:2060px;top:1558px" width="21" height="21" viewBox="0 0 22 22"><path d="M3 1H19L21 3V19L19 21H3L1 19V3Z" fill="none" stroke="#8c8c8c" stroke-opacity="1.0" stroke-width="2"/><path d="M6.5 6.5L15.5 15.5M15.5 6.5L6.5 15.5" stroke="#8c8c8c" stroke-width="3.4"/><path d="M4.6 7.4L7.4 4.6M14.6 4.6L17.4 7.4M4.6 14.6L7.4 17.4M14.6 17.4L17.4 14.6" stroke="#8c8c8c" stroke-width="2.2"/></svg>
<svg style="position:absolute;left:1822px;top:1553px" width="26" height="34"><rect x="1" y="1" width="22" height="31" fill="#f0f0fa" stroke="#9c9cc0" stroke-width="2"/><path d="M20 3L24 7L10 25L5 28L7 22Z" fill="#ff9a1a" stroke="#e25b00" stroke-width="1.2"/><path d="M5 28L7 22L10 25Z" fill="#333"/></svg>
<div style="left:2091px;top:1546px;width:307px;height:42px;border:2px solid #b4b4b4;border-bottom:0;border-radius:4px 4px 0 0;background:linear-gradient(#f2f2f2 45%,#e6e6e6 50%,#e9e9e9)"></div>
<div class="t" style="left:2145px;top:1569.95px;font-size:29px;color:#1e1e1e;transform:scaleX(1.0109);transform-origin:0 0;">Search results</div>
<svg style="position:absolute;left:2372px;top:1558px" width="21" height="21" viewBox="0 0 22 22"><path d="M3 1H19L21 3V19L19 21H3L1 19V3Z" fill="none" stroke="#8c8c8c" stroke-opacity="1.0" stroke-width="2"/><path d="M6.5 6.5L15.5 15.5M15.5 6.5L6.5 15.5" stroke="#8c8c8c" stroke-width="3.4"/><path d="M4.6 7.4L7.4 4.6M14.6 4.6L17.4 7.4M4.6 14.6L7.4 17.4M14.6 17.4L17.4 14.6" stroke="#8c8c8c" stroke-width="2.2"/></svg>
<svg style="position:absolute;left:2104px;top:1552px" width="34" height="36"><defs><linearGradient id="mg" x1="0" y1="0" x2="0.6" y2="1"><stop offset="0" stop-color="#f0f8fc"/><stop offset="1" stop-color="#a8cfe0"/></linearGradient></defs><circle cx="14" cy="14" r="11" fill="url(#mg)" stroke="#3f80a2" stroke-width="2.2"/><path d="M20.5 21.5L27 28" stroke="#c9a437" stroke-width="7.5" stroke-linecap="round"/><path d="M22 21L26.5 25.5" stroke="#e0c050" stroke-width="2.5" stroke-linecap="round"/></svg>
<div style="left:2403px;top:1546px;width:231px;height:42px;border:2px solid #b4b4b4;border-bottom:0;border-radius:4px 4px 0 0;background:linear-gradient(#f2f2f2 45%,#e6e6e6 50%,#e9e9e9)"></div>
<div class="t" style="left:2458px;top:1569.95px;font-size:29px;color:#1e1e1e;transform:scaleX(1.0654);transform-origin:0 0;">Build log</div>
<svg style="position:absolute;left:2608px;top:1558px" width="21" height="21" viewBox="0 0 22 22"><path d="M3 1H19L21 3V19L19 21H3L1 19V3Z" fill="none" stroke="#8c8c8c" stroke-opacity="1.0" stroke-width="2"/><path d="M6.5 6.5L15.5 15.5M15.5 6.5L6.5 15.5" stroke="#8c8c8c" stroke-width="3.4"/><path d="M4.6 7.4L7.4 4.6M14.6 4.6L17.4 7.4M4.6 14.6L7.4 17.4M14.6 17.4L17.4 14.6" stroke="#8c8c8c" stroke-width="2.2"/></svg>
<svg style="position:absolute;left:2417px;top:1553px" width="34" height="34" viewBox="0 0 34 34"><circle cx="17" cy="17" r="9" fill="none" stroke="#0a7cff" stroke-width="7"/><g fill="#0a7cff"><rect x="14.5" y="1.5" width="5" height="6" transform="rotate(15 17 17)"/><rect x="14.5" y="1.5" width="5" height="6" transform="rotate(60 17 17)"/><rect x="14.5" y="1.5" width="5" height="6" transform="rotate(105 17 17)"/><rect x="14.5" y="1.5" width="5" height="6" transform="rotate(150 17 17)"/><rect x="14.5" y="1.5" width="5" height="6" transform="rotate(195 17 17)"/><rect x="14.5" y="1.5" width="5" height="6" transform="rotate(240 17 17)"/><rect x="14.5" y="1.5" width="5" height="6" transform="rotate(285 17 17)"/><rect x="14.5" y="1.5" width="5" height="6" transform="rotate(330 17 17)"/></g></svg>
<div style="left:2639px;top:1546px;width:323px;height:42px;border:2px solid #b4b4b4;border-bottom:0;border-radius:4px 4px 0 0;background:linear-gradient(#f2f2f2 45%,#e6e6e6 50%,#e9e9e9)"></div>
<div class="t" style="left:2693px;top:1569.95px;font-size:29px;color:#1e1e1e;transform:scaleX(1.0000);transform-origin:0 0;">Build messages</div>
<svg style="position:absolute;left:2936px;top:1558px" width="21" height="21" viewBox="0 0 22 22"><path d="M3 1H19L21 3V19L19 21H3L1 19V3Z" fill="none" stroke="#8c8c8c" stroke-opacity="1.0" stroke-width="2"/><path d="M6.5 6.5L15.5 15.5M15.5 6.5L6.5 15.5" stroke="#8c8c8c" stroke-width="3.4"/><path d="M4.6 7.4L7.4 4.6M14.6 4.6L17.4 7.4M4.6 14.6L7.4 17.4M14.6 17.4L17.4 14.6" stroke="#8c8c8c" stroke-width="2.2"/></svg>
<svg style="position:absolute;left:2650px;top:1548px" width="40" height="44"><defs><linearGradient id="fg" x1="0" y1="1" x2="0.8" y2="0"><stop offset="0" stop-color="#d82818"/><stop offset="1" stop-color="#f07060"/></linearGradient></defs><path d="M9.5 16L23 38" stroke="#c19a0a" stroke-width="3.2"/><path d="M20 6.5L25 6.5L30 12L33.5 17L33.5 19.5L26 21L24 27L19 27.5L14 21L12.5 15.5L16 9.5Z" fill="url(#fg)" stroke="#b01008" stroke-width="1.2"/></svg>
<div style="left:2968px;top:1546px;width:244px;height:46px;border:2px solid #a9a9a9;border-bottom:0;border-radius:4px 4px 0 0;background:linear-gradient(#fff 35%,#e9e9e9)"></div>
<div class="t" style="left:3020px;top:1569.95px;font-size:29px;font-weight:700;transform:scaleX(1.0602);transform-origin:0 0;">Debugger</div>
<svg style="position:absolute;left:3186px;top:1558px" width="21" height="21" viewBox="0 0 22 22"><path d="M3 1H19L21 3V19L19 21H3L1 19V3Z" fill="none" stroke="#8c8c8c" stroke-opacity="1.0" stroke-width="2"/><path d="M6.5 6.5L15.5 15.5M15.5 6.5L6.5 15.5" stroke="#8c8c8c" stroke-width="3.4"/><path d="M4.6 7.4L7.4 4.6M14.6 4.6L17.4 7.4M4.6 14.6L7.4 17.4M14.6 17.4L17.4 14.6" stroke="#8c8c8c" stroke-width="2.2"/></svg>
<svg style="position:absolute;left:2979px;top:1553px" width="34" height="34" viewBox="0 0 34 34"><circle cx="17" cy="17" r="9" fill="none" stroke="#0a7cff" stroke-width="7"/><g fill="#0a7cff"><rect x="14.5" y="1.5" width="5" height="6" transform="rotate(15 17 17)"/><rect x="14.5" y="1.5" width="5" height="6" transform="rotate(60 17 17)"/><rect x="14.5" y="1.5" width="5" height="6" transform="rotate(105 17 17)"/><rect x="14.5" y="1.5" width="5" height="6" transform="rotate(150 17 17)"/><rect x="14.5" y="1.5" width="5" height="6" transform="rotate(195 17 17)"/><rect x="14.5" y="1.5" width="5" height="6" transform="rotate(240 17 17)"/><rect x="14.5" y="1.5" width="5" height="6" transform="rotate(285 17 17)"/><rect x="14.5" y="1.5" width="5" height="6" transform="rotate(330 17 17)"/></g></svg>
<div class="t" style="left:1795px;top:1617.88px;font-size:23px;font-family:'Liberation Mono', monospace;-webkit-text-stroke:0.45px #000;transform:scaleX(0.8711);transform-origin:0 0;">At /mnt/dev/tools/source/ns-3-dev/examples/tutorial/first.cc:74</div>
</div></body></html>
